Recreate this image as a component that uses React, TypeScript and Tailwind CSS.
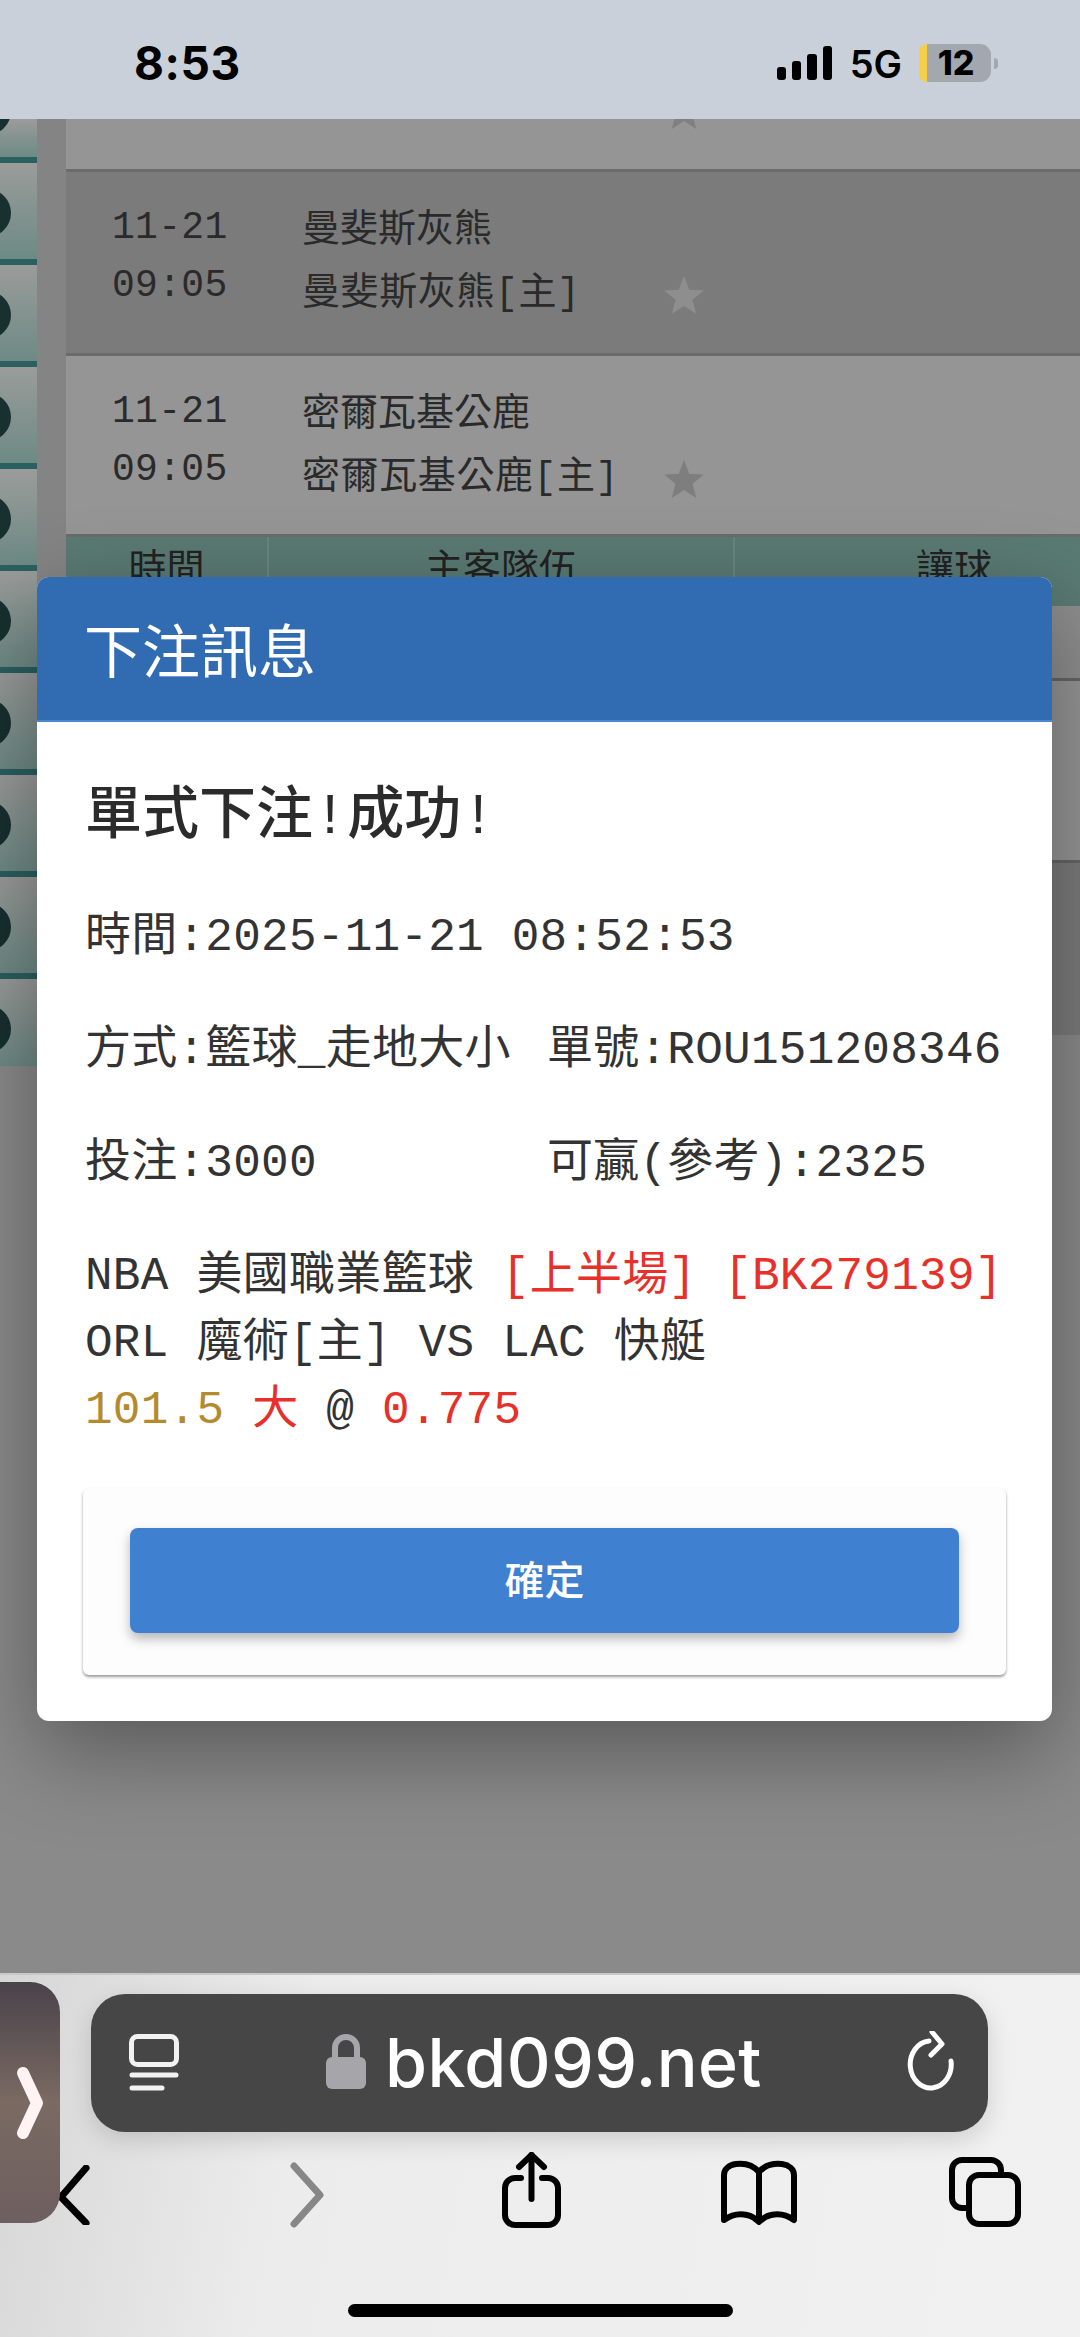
import React from "react";

const mono = "font-['Liberation_Mono','Noto_Sans_CJK_TC',monospace]";

function Star({ className = "" }: { className?: string }) {
  return (
    <svg width="40" height="38" viewBox="0 0 24 23" className={className}>
      <path d="M12 0l3.2 8.3 8.8.5-6.8 5.6 2.2 8.6L12 18.2 4.6 23l2.2-8.6L0 8.8l8.8-.5z" fill="currentColor" />
    </svg>
  );
}

function Cell({ h, top, line = true }: { h: number; top: number; line?: boolean }) {
  return (
    <div className={`relative w-full overflow-hidden bg-gradient-to-b from-[#9a9c9a] to-[#6d8a85] ${line ? "border-b-[6px] border-[#2b5f60]" : ""}`} style={{ height: h }}>
      <div className="absolute left-[-37px] size-12 rounded-full bg-[#183030]" style={{ top }} />
    </div>
  );
}

function MatchRow({ name, bg, star, h }: { name: string; bg: string; star: string; h: string }) {
  return (
    <div className={`flex shrink-0 border-b-[3px] border-[#6b6b6b] ${bg} ${h} ${mono} text-[38px] text-[#2a2a2a]`}>
      <div className="flex w-[236px] flex-col gap-0 pl-[46px] pt-[27px] leading-[58px] tracking-[0.3px]">
        <div>11-21</div>
        <div>09:05</div>
      </div>
      <div className="flex w-[362px] flex-col pt-[27px] leading-[63px]">
        <div>{name}</div>
        <div className="tracking-[0.6px]">{name}[主]</div>
      </div>
      <Star className={`mt-[104px] ${star}`} />
    </div>
  );
}

export default function App() {
  return (
    <div className="flex h-[2337px] w-[1080px] flex-col overflow-hidden bg-[#8a8a8a]">
      {/* status bar */}
      <div className="relative z-20 flex h-[119px] shrink-0 items-start bg-[#c9d0d9] font-['Inter',sans-serif] text-black">
        <div className="ml-[134px] mt-[38px] text-[46px] font-bold leading-[50px] tracking-[0.6px]">8:53</div>
        <div className="ml-auto mr-[82px] mt-[44px] flex items-start">
          <div className="mt-[2px] flex h-[34px] items-end gap-[6px]">
            <div className="h-[13px] w-[9px] rounded-[3px] bg-black" />
            <div className="h-[19px] w-[9px] rounded-[3px] bg-black" />
            <div className="h-[26px] w-[10px] rounded-[3px] bg-black" />
            <div className="h-[34px] w-[9px] rounded-[3px] bg-black" />
          </div>
          <div className="ml-[18px] mt-[1px] text-[38px] font-semibold leading-[38px]">5G</div>
          <div className="ml-[17px] flex h-[38px] w-[72px] rounded-[11px] bg-[#a3a7ae]">
            <div className="h-full w-[8px] rounded-l-[11px] bg-[#f7cf46]" />
            <div className="flex-1 pr-[6px] text-center text-[34px] font-extrabold leading-[38px]">12</div>
          </div>
          <div className="ml-[3px] mt-[14px] h-[11px] w-[4px] rounded-r-full bg-[#a3a7ae]" />
        </div>
      </div>

      {/* page under the dialog */}
      <div className="relative flex h-[1854px] shrink-0 items-start overflow-hidden bg-[#8a8a8a]">
        <div className="flex w-[37px] shrink-0 flex-col">
          <Cell h={44} top={-32} />
          {Array.from({ length: 8 }).map((_, i) => (
            <Cell key={i} h={102} top={26} />
          ))}
          <Cell h={87} top={26} line={false} />
        </div>
        <div className="h-[947px] w-[29px] shrink-0 bg-[#848484]" />
        <div className="flex min-w-0 flex-1 flex-col overflow-hidden">
          <div className="h-[53px] shrink-0 border-b-[3px] border-[#6b6b6b] bg-[#959595] pl-[598px]">
            <Star className="mt-[-28px] text-[#808080]" />
          </div>
          <MatchRow name="曼斐斯灰熊" bg="bg-[#7b7b7b]" star="text-[#8e8e8e]" h="h-[184px]" />
          <MatchRow name="密爾瓦基公鹿" bg="bg-[#959595]" star="text-[#7e7e7e]" h="h-[181px]" />
          <div className={`flex h-[69px] shrink-0 items-start bg-[#5a7a74] ${mono} text-[38px] leading-[52px] text-[#222]`}>
            <div className="h-full w-[203px] shrink-0 border-r-2 border-[#6a8580] pt-[8px] text-center">時間</div>
            <div className="h-full w-[466px] shrink-0 border-r-2 border-[#6a8580] pt-[8px] text-center">主客隊伍</div>
            <div className="h-full w-[438px] shrink-0 pt-[8px] text-center">讓球</div>
          </div>
          <div className="h-[75px] shrink-0 border-b-[3px] border-[#666] bg-[#8e8e8e]" />
          <div className="h-[182px] shrink-0 border-b-[3px] border-[#666] bg-[#959595]" />
          <div className="h-[172px] shrink-0 bg-[#7b7b7b]" />
        </div>

        {/* dialog */}
        <div className="absolute left-[37px] top-[458px] w-[1015px] overflow-hidden rounded-[12px] bg-white shadow-[0_30px_90px_rgba(0,0,0,0.36)]">
          <div className="flex h-[145px] items-center border-b-2 border-[#4c86d0] bg-[#316cb2] pl-[47px] font-['Noto_Sans_CJK_TC',sans-serif] text-[58px] font-normal text-white">
            下注訊息
          </div>
          <div className={`px-[48px] pt-[56px] ${mono} text-[46px] leading-[67px] tracking-[0.25px] whitespace-nowrap text-[#333]`}>
            <div className="text-[57px] font-medium leading-[80px] tracking-normal text-[#2b2b2b]">單式下注!成功!</div>
            <div className="mt-[47px]">時間:2025-11-21 08:52:53</div>
            <div className="mt-[46px] grid grid-cols-[462px_1fr]">
              <div>方式:籃球_走地大小</div>
              <div>單號:ROU151208346</div>
            </div>
            <div className="mt-[46px] grid grid-cols-[462px_1fr]">
              <div>投注:3000</div>
              <div>可贏(參考):2325</div>
            </div>
            <div className="mt-[46px]">
              <div>
                NBA 美國職業籃球 <span className="text-[#e8302a]">[上半場] [BK279139]</span>
              </div>
              <div>ORL 魔術[主] VS LAC 快艇</div>
              <div>
                <span className="text-[#b38a2e]">101.5</span> <span className="text-[#e8302a]">大</span> @ <span className="text-[#e8302a]">0.775</span>
              </div>
            </div>
          </div>
          <div className="mx-[46px] mb-[46px] mt-[43px] rounded-[6px] bg-[#fdfdfd] px-[47px] pb-[42px] pt-[40px] shadow-[0_2px_3px_rgba(0,0,0,0.4)]">
            <div className="flex h-[105px] items-center justify-center rounded-[8px] bg-[#4080d0] pb-[6px] font-['Noto_Sans_CJK_TC',sans-serif] text-[40px] font-medium text-white shadow-[0_6px_12px_rgba(0,0,0,0.28)]">
              確定
            </div>
          </div>
        </div>
      </div>

      {/* browser bar */}
      <div className="relative z-20 flex h-[364px] shrink-0 flex-col border-t-2 border-[#c8c8c8] bg-[linear-gradient(100deg,#d6d6d6,#ececec_28%,#f1f1f1)]">
        <div className="absolute left-0 top-[7px] z-10 flex h-[241px] w-[60px] items-center rounded-r-[30px] bg-gradient-to-b from-[#4a434b] via-[#7a6a62] to-[#6e5f60]">
          <svg width="60" height="80" viewBox="0 0 60 80">
            <path d="M23 10 L37 40 L23 70" fill="none" stroke="#fff3f3" strokeWidth="12" strokeLinecap="round" strokeLinejoin="round" />
          </svg>
        </div>

        <div className="ml-[91px] mt-[19px] flex h-[138px] w-[897px] shrink-0 items-start rounded-[34px] bg-[#464646] shadow-[0_8px_24px_rgba(0,0,0,0.14)]">
          <svg width="50" height="60" viewBox="0 0 50 60" className="ml-[38px] mt-[40px] shrink-0">
            <rect x="2.5" y="2.5" width="45" height="28" rx="6" fill="none" stroke="#f2f2f2" strokeWidth="5" />
            <path d="M3 41h44" stroke="#f2f2f2" strokeWidth="5" strokeLinecap="round" />
            <path d="M3 54h30" stroke="#f2f2f2" strokeWidth="5" strokeLinecap="round" />
          </svg>
          <svg width="40" height="56" viewBox="0 0 40 56" className="ml-[147px] mt-[40px] shrink-0">
            <path d="M9 24V14a11 11 0 0 1 22 0v10" fill="none" stroke="#a5a5aa" strokeWidth="6" />
            <rect x="0" y="23" width="40" height="32" rx="6" fill="#a5a5aa" />
          </svg>
          <div className="ml-[19px] mt-[30px] font-['Inter',sans-serif] text-[68px] font-medium leading-[76px] tracking-[0.4px] text-white">bkd099.net</div>
          <svg width="48" height="60" viewBox="0 0 48 60" className="ml-auto mr-[33px] mt-[37px] shrink-0">
            <path d="M44 30a20.5 23.5 0 1 1-22-20" fill="none" stroke="#fff" strokeWidth="5" strokeLinecap="round" />
            <path d="M25 1 L35 13 L24 24" fill="none" stroke="#fff" strokeWidth="5" strokeLinecap="round" strokeLinejoin="round" />
          </svg>
        </div>

        <div className="ml-[55px] mt-[20px] flex h-[82px] shrink-0 items-start">
          <svg width="36" height="60" viewBox="0 0 36 60" className="mt-[13px] shrink-0">
            <path d="M31 3 L6 32 L31 58" fill="none" stroke="#000" strokeWidth="7" strokeLinecap="round" strokeLinejoin="round" />
          </svg>
          <svg width="36" height="66" viewBox="0 0 36 66" className="ml-[199px] mt-[10px] shrink-0">
            <path d="M4 4 L30 33 L4 62" fill="none" stroke="#878787" strokeWidth="7" strokeLinecap="round" strokeLinejoin="round" />
          </svg>
          <svg width="59" height="76" viewBox="0 0 59 76" className="ml-[176px] shrink-0">
            <path d="M19 26H13a10 10 0 0 0-10 10v27a10 10 0 0 0 10 10h33a10 10 0 0 0 10-10V36a10 10 0 0 0-10-10h-6" fill="none" stroke="#000" strokeWidth="6" strokeLinecap="round" />
            <path d="M29.5 3V47" stroke="#000" strokeWidth="6" strokeLinecap="round" />
            <path d="M17 15L29.5 3 42 15" fill="none" stroke="#000" strokeWidth="6" strokeLinecap="round" strokeLinejoin="round" />
          </svg>
          <svg width="76" height="65" viewBox="0 0 76 65" className="ml-[160px] mt-[8px] shrink-0">
            <path d="M38 12C32 5 23 3 15 4 8 5 3 9 3 15V60C10 55 18 53 26 55 31 56 35 59 38 62 41 59 45 56 50 55 58 53 66 55 73 60V15C73 9 68 5 61 4 53 3 44 5 38 12Z" fill="none" stroke="#000" strokeWidth="6" strokeLinejoin="round" />
            <path d="M38 12V60" stroke="#000" strokeWidth="6" />
          </svg>
          <svg width="72" height="70" viewBox="0 0 72 70" className="ml-[152px] mt-[5px] shrink-0">
            <path d="M17 51H13a10 10 0 0 1-10-10V13A10 10 0 0 1 13 3h29a10 10 0 0 1 10 10v5" fill="none" stroke="#000" strokeWidth="6" />
            <rect x="20" y="18" width="49" height="49" rx="10" fill="none" stroke="#000" strokeWidth="6" />
          </svg>
        </div>

        <div className="ml-[348px] mt-[70px] h-[13px] w-[385px] shrink-0 rounded-full bg-black" />
      </div>
    </div>
  );
}
